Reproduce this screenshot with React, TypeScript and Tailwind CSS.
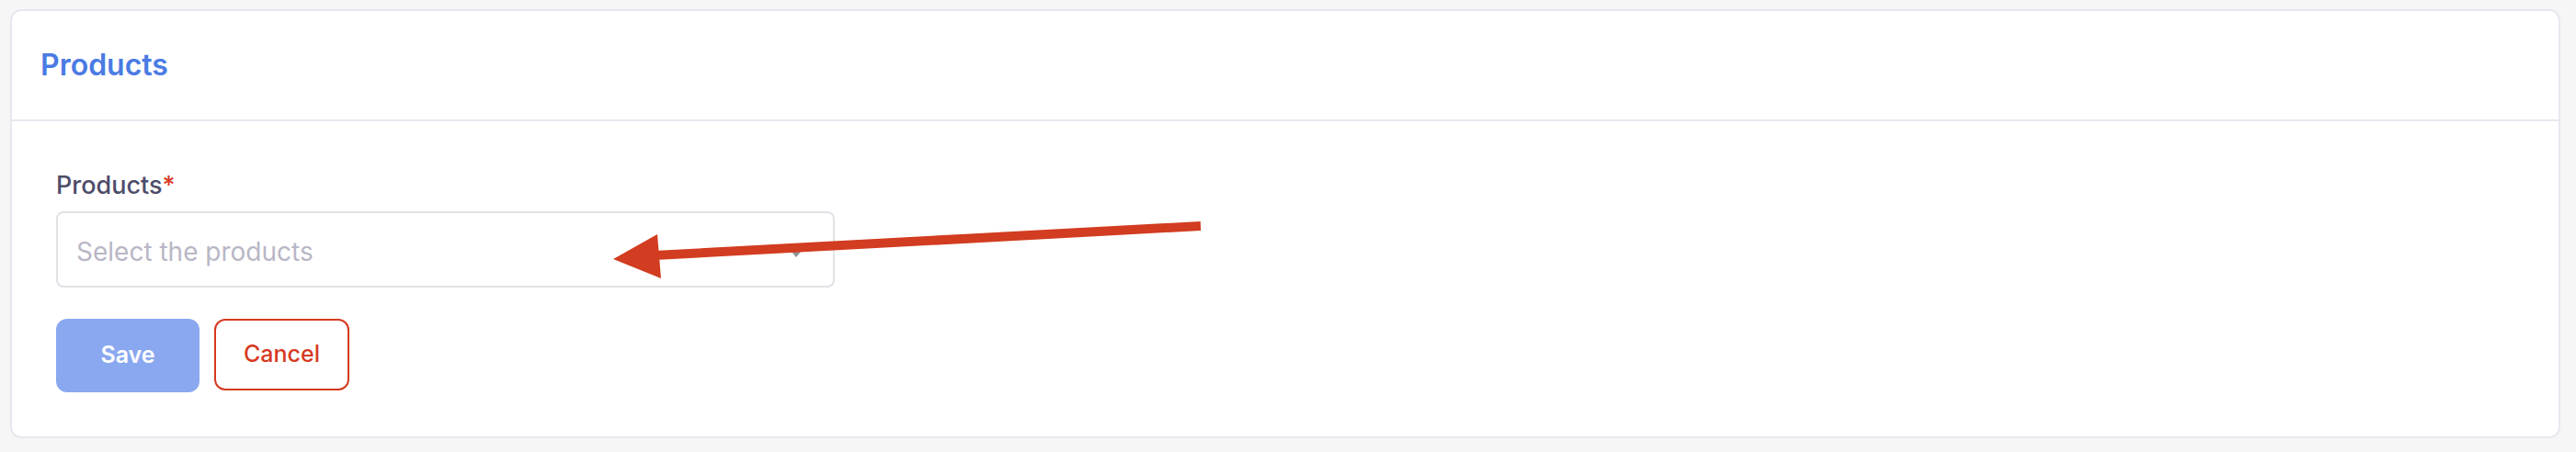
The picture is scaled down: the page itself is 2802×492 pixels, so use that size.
export default function App() {
    return (
        <div className="relative min-h-[492px] bg-[#f6f6f7] pt-[10px] pl-[11px] font-['Inter',sans-serif]">
            {/* Card */}
            <div className="w-[2774px] rounded-[12px] border-2 border-[#e8e7ef] bg-white">
                {/* Header */}
                <div className="flex h-[120px] items-center border-b-2 border-[#e8e7ef] px-[31px]">
                    <h1 className="text-[32px] font-semibold text-[#4a7be3]">Products</h1>
                </div>

                {/* Body */}
                <div className="px-[48px] pt-[52px] pb-[48px]">
                    <label className="block text-[27px] font-medium leading-[36px] text-[#4e4c6a]">
                        Products<span className="text-[#d7391f]">*</span>
                    </label>
                    <div className="relative mt-[10px] flex h-[83px] w-[847px] items-center rounded-[8px] border-2 border-[#e0e2e7] pl-[20px] pt-[4px]">
                        <span className="text-[28px] text-[#b8b7c5]">Select the products</span>
                        <span className="absolute right-[35px] top-[42px] h-0 w-0 border-x-[5px] border-t-[6px] border-x-transparent border-t-[#8f8f96]" />
                    </div>
                    <div className="mt-[34px] flex items-start gap-[16px]">
                        <button className="h-[80px] w-[156px] rounded-[12px] bg-[#8aa8ef] text-[25px] font-semibold text-white">
                            Save
                        </button>
                        <button className="h-[78px] w-[147px] rounded-[12px] border-2 border-[#d6391f] text-[25px] font-medium text-[#d6391f]">
                            Cancel
                        </button>
                    </div>
                </div>
            </div>

            {/* Annotation arrow */}
            <svg className="pointer-events-none absolute left-0 top-0" width="2802" height="492">
                <line x1="712" y1="278" x2="1306" y2="246" stroke="#d23c20" strokeWidth="10" />
                <polygon points="667,282 715,255 719,303" fill="#d23c20" />
            </svg>
        </div>
    )
}
